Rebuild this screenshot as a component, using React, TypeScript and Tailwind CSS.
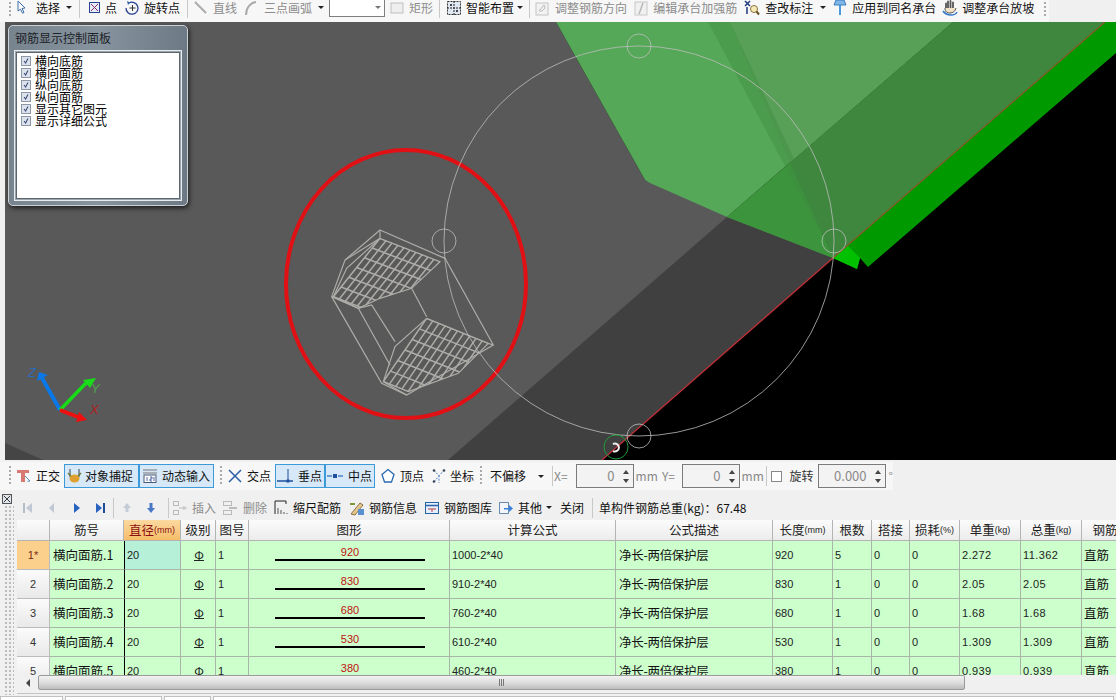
import React from "react";

const cjk = "font-['Noto_Sans_CJK_SC','Liberation_Sans',sans-serif]";
const digits = "font-['Liberation_Sans','Noto_Sans_CJK_SC',sans-serif]";

type IconProps = { children: React.ReactNode; className?: string };

const Ico: React.FC<IconProps> = ({ children, className = "" }) => (
  <svg viewBox="0 0 16 16" className={`w-4 h-4 shrink-0 ${className}`} fill="none">
    {children}
  </svg>
);

const Caret = ({ className = "" }: { className?: string }) => (
  <span className={`inline-block w-0 h-0 shrink-0 border-l-[3px] border-r-[3px] border-t-[3px] border-l-transparent border-r-transparent border-t-[#222] ${className}`} />
);

const Grip = ({ className = "" }: { className?: string }) => (
  <span className={`w-[2px] h-[20px] shrink-0 bg-[repeating-linear-gradient(180deg,#aaa_0_2px,transparent_2px_4px)] ${className}`} />
);

const Sep = ({ className = "" }: { className?: string }) => (
  <span className={`w-px h-[20px] shrink-0 bg-[#c8c8c8] ${className}`} />
);

type ToolProps = { icon?: React.ReactNode; label: string; off?: boolean; gap?: string; className?: string };

const Tool: React.FC<ToolProps> = ({ icon, label, off, gap = "gap-[4px]", className = "" }) => (
  <div className={`flex items-center shrink-0 whitespace-nowrap ${gap} ${off ? "text-[#8c8c8c]" : "text-[#111]"} ${className}`}>
    {icon}
    <span>{label}</span>
  </div>
);

const icons = {
  cursor: (
    <Ico>
      <path d="M5 1l7 7-3 .5 2 4-1.500.7-2-4L5 11z" fill="#fff" stroke="#3b6ea8" />
    </Ico>
  ),
  point: (
    <Ico>
      <rect x="2.500" y="2.500" width="10" height="10" stroke="#27408f" fill="#e9edf8" />
      <path d="M4 4l7 7M11 4l-7 7" stroke="#8a2a6a" />
    </Ico>
  ),
  rotate: (
    <Ico>
      <path d="M5 3a6 6 0 1 1-3 5" stroke="#27408f" strokeWidth="1.300" />
      <path d="M3 1l3 1.500-2 2.500z" fill="#2a62b0" />
      <path d="M8.500 5v6M5.500 8h6" stroke="#333" />
    </Ico>
  ),
  line: (
    <Ico>
      <path d="M2 2l11 11" stroke="#aaa" strokeWidth="2" />
    </Ico>
  ),
  arc: (
    <Ico>
      <path d="M3 15C3 8 7 3 13 2" stroke="#aaa" strokeWidth="2" />
    </Ico>
  ),
  rect: (
    <Ico>
      <rect x="2" y="3" width="12" height="10" fill="#eee" stroke="#c0c0c0" />
    </Ico>
  ),
  smart: (
    <Ico>
      <rect x="1.500" y="1.500" width="13" height="13" stroke="#333" fill="#dfe7f2" strokeDasharray="2 1" />
      <path d="M8 1v14M1 8h14" stroke="#222" strokeDasharray="2 1" />
      <circle cx="5" cy="5" r="1" fill="#111" />
      <circle cx="11" cy="11" r="1" fill="#111" />
    </Ico>
  ),
  adjust: (
    <Ico>
      <rect x="2" y="3" width="12" height="12" fill="#f2f2f2" stroke="#c4c4c4" />
      <path d="M5 11l5-6 1 3-3 3z" stroke="#bbb" />
    </Ico>
  ),
  edit: (
    <Ico>
      <rect x="2" y="2" width="12" height="13" fill="#f0f0f0" stroke="#c8c8c8" />
      <path d="M10 3L6 14" stroke="#b8b8b8" strokeWidth="1.500" />
    </Ico>
  ),
  search: (
    <Ico>
      <path d="M1 1l5 5M6 1L1 6M3 7v7" stroke="#203a80" strokeWidth="1.500" />
      <circle cx="10" cy="9" r="3.500" fill="#f6e9b8" stroke="#8a7440" />
      <path d="M12.500 11.500L15 14.500" stroke="#6a5020" strokeWidth="2" />
    </Ico>
  ),
  pin: (
    <Ico>
      <path d="M4 0h8l2 5H2z" fill="#7fb6e6" stroke="#3a7fc0" />
      <path d="M7 5h2v10H7z" fill="#4a98de" />
    </Ico>
  ),
  hand: (
    <Ico>
      <path d="M4 9V3.500M6 8V1.500M8.500 8V1M11 8V2.500" stroke="#555" strokeWidth="1.800" strokeLinecap="round" />
      <path d="M3 8c0 4 2 5 5 5s5-1.500 6-5" stroke="#555" fill="#f2e3c8" />
      <path d="M1 11c2 3 5 4 8 4s5-1 6-3" stroke="#2f78c8" strokeWidth="1.500" />
    </Ico>
  ),
  ortho: (
    <Ico>
      <path d="M1 2h12v3H9v9H5V5H1z" fill="#d97a72" />
      <path d="M9 8l5 5-2.500.3" stroke="#5a8db8" />
    </Ico>
  ),
  snap: (
    <Ico>
      <path d="M3 1v8M12 1v8" stroke="#5a6a7a" strokeWidth="1.300" />
      <ellipse cx="7.500" cy="10.500" rx="5" ry="4" fill="#e0a030" />
      <path d="M1 5l3 3M14 5l-3 3" stroke="#6a7a38" strokeWidth="1.500" />
    </Ico>
  ),
  dyn: (
    <Ico>
      <path d="M1 2h14M1 5h14" stroke="#777" />
      <rect x="2" y="7" width="12" height="7.500" fill="#fff" stroke="#4a5a78" />
      <path d="M5 9v4M8 9h2v2H8v2h2M12 9v4" stroke="#27408f" strokeWidth=".8" />
    </Ico>
  ),
  cross: (
    <Ico>
      <path d="M2 2l12 12M14 2L2 14" stroke="#2a5ea8" strokeWidth="1.500" />
    </Ico>
  ),
  perp: (
    <Ico>
      <path d="M0 13h16" stroke="#1f4f9f" strokeWidth="1.500" />
      <path d="M11 1v12" stroke="#1f4f9f" />
      <rect x="9.500" y="11.500" width="3" height="3" fill="#1f4f9f" />
    </Ico>
  ),
  mid: (
    <Ico>
      <path d="M0 8h5M11 8h5" stroke="#4a82c8" strokeWidth="1.500" />
      <rect x="6" y="6" width="4" height="4" fill="#1f4f9f" />
    </Ico>
  ),
  vertex: (
    <Ico>
      <path d="M8 1.500l6 5-2.500 7.500h-7L2 6.500z" stroke="#2a6ab0" fill="#fff" strokeWidth="1.300" />
    </Ico>
  ),
  coord: (
    <Ico>
      <path d="M3 14L8 8 13 2M3 2l5 6v7" stroke="#4a82c8" strokeDasharray="2 1.500" />
      <circle cx="3" cy="2.500" r="1.300" fill="#345" />
      <circle cx="13" cy="2.500" r="1.300" fill="#345" />
      <circle cx="3" cy="13.500" r="1.300" fill="#345" />
    </Ico>
  ),
  first: (
    <Ico>
      <path d="M4 3v10" stroke="#b4bcc8" strokeWidth="2" />
      <path d="M12 3v10L6 8z" fill="#c0c8d4" />
    </Ico>
  ),
  prev: (
    <Ico>
      <path d="M10 3v10L5 8z" fill="#c0c8d4" />
    </Ico>
  ),
  next: (
    <Ico>
      <path d="M6 3v10l6-5z" fill="#2a62c0" />
    </Ico>
  ),
  last: (
    <Ico>
      <path d="M4 3v10l6-5z" fill="#2a62c0" />
      <path d="M12 3v10" stroke="#1f4a98" strokeWidth="2" />
    </Ico>
  ),
  up: (
    <Ico>
      <path d="M8 3l4 5H9.500v4h-3V8H4z" fill="#c4ccd8" />
    </Ico>
  ),
  down: (
    <Ico>
      <path d="M6.500 3h3v5H12l-4 5-4-5h2.500z" fill="#4a78c8" />
    </Ico>
  ),
  insert: (
    <Ico>
      <rect x="1.500" y="1.500" width="5" height="4" stroke="#bbb" />
      <rect x="1.500" y="10.500" width="5" height="4" stroke="#bbb" />
      <path d="M7 8h8M12 6v4" stroke="#bbb" />
    </Ico>
  ),
  del: (
    <Ico>
      <rect x="1.500" y="1.500" width="8" height="4" stroke="#bbb" />
      <rect x="1.500" y="10.500" width="8" height="4" stroke="#bbb" />
      <path d="M7 8h8" stroke="#aaa" strokeWidth="1.500" />
    </Ico>
  ),
  scale: (
    <Ico>
      <path d="M2 1h11v3M2 1v13" stroke="#222" />
      <path d="M5 14V8M8 14v-4M11 14v-2M14 14v-1" stroke="#888" strokeWidth="1.500" />
    </Ico>
  ),
  info: (
    <Ico>
      <path d="M2 14L11 3l3 2-8 10z" fill="#e4c890" stroke="#8a7040" />
      <path d="M9 9h6v6H9z" fill="#5a90d0" />
      <path d="M1 4h5" stroke="#7a9a3a" strokeWidth="2" />
    </Ico>
  ),
  lib: (
    <Ico>
      <rect x="1.500" y="2.500" width="13" height="11" fill="#e4eefa" stroke="#2a62a8" />
      <path d="M2 5.500h12" stroke="#2a62a8" strokeWidth="1.500" />
      <path d="M4 9h8M8 9v3" stroke="#c04040" />
    </Ico>
  ),
  other: (
    <Ico>
      <rect x="1.500" y="2.500" width="9" height="11" fill="#f2f6fb" stroke="#6a8ab0" />
      <path d="M6 8h5V5l4 3.500-4 3.500V9.500H6z" fill="#3a82d8" />
    </Ico>
  ),
};

const Spin = ({ value, width }: { value: string; width: string }) => (
  <div className={`flex h-[24px] items-center justify-end border border-[#7b7b7b] bg-[#f3f3f3] shrink-0 ${width}`}>
    <span className={`text-[13px] text-[#8a8a8a] ${cjk}`}>{value}</span>
    <div className="ml-[6px] mr-[2px] flex w-[10px] flex-col items-center gap-[5px]">
      <span className="h-0 w-0 border-b-[4px] border-l-[3px] border-r-[3px] border-b-[#444] border-l-transparent border-r-transparent" />
      <span className="h-0 w-0 border-t-[4px] border-l-[3px] border-r-[3px] border-t-[#444] border-l-transparent border-r-transparent" />
    </div>
  </div>
);

const TopBar = () => (
  <div className={`flex h-[22px] shrink-0 bg-[#f0f0f0] overflow-hidden text-[12px] ${cjk}`}>
    <div className="flex h-[15px] w-[1049px] items-center bg-[#f7f7f7] pl-[9px] shadow-[0_7px_0_#f7f7f7]">
      <Grip />
      <Tool icon={icons.cursor} label="选择" gap="gap-[7px]" className="ml-[2px]" />
      <Caret className="ml-[6px]" />
      <Sep className="ml-[7px]" />
      <Tool icon={icons.point} label="点" gap="gap-[2px]" className="ml-[7px]" />
      <Tool icon={icons.rotate} label="旋转点" className="ml-[7px]" />
      <Sep className="ml-[7px]" />
      <Tool icon={icons.line} label="直线" off className="ml-[5px]" />
      <Tool icon={icons.arc} label="三点画弧" off gap="gap-[5px]" className="ml-[6px]" />
      <Caret className="ml-[6px]" />
      <div className="ml-[5px] flex h-[19px] w-[56px] shrink-0 items-center justify-end border border-t-0 border-[#7f7f7f] bg-white pr-[3px]">
        <Caret className="border-t-[#777]" />
      </div>
      <Tool icon={icons.rect} label="矩形" off gap="gap-[4px]" className="ml-[4px]" />
      <Sep className="ml-[6px]" />
      <Tool icon={icons.smart} label="智能布置" className="ml-[6px]" />
      <Caret className="ml-[3px]" />
      <Sep className="ml-[6px]" />
      <Tool icon={icons.adjust} label="调整钢筋方向" off gap="gap-[5px]" className="ml-[4px]" />
      <Tool icon={icons.edit} label="编辑承台加强筋" off gap="gap-[4px]" className="ml-[6px]" />
      <Tool icon={icons.search} label="查改标注" gap="gap-[5px]" className="ml-[7px]" />
      <Caret className="ml-[7px]" />
      <Tool icon={icons.pin} label="应用到同名承台" gap="gap-[4px]" className="ml-[6px]" />
      <Tool icon={icons.hand} label="调整承台放坡" gap="gap-[4px]" className="ml-[6px]" />
      <Grip className="ml-[10px]" />
    </div>
  </div>
);

const Check = () => (
  <span className="flex h-[10px] w-[10px] shrink-0 items-center justify-center border border-[#8d97a5] bg-[#dbe2ec]">
    <svg viewBox="0 0 10 10" className="h-[10px] w-[10px]" fill="none">
      <path d="M2.500 5l2 2.500L7.500 2" stroke="#38487a" strokeWidth="1.300" />
    </svg>
  </span>
);

const panelItems = ["横向底筋", "横向面筋", "纵向底筋", "纵向面筋", "显示其它图元", "显示详细公式"];

const RebarPanel = () => (
  <div className={`absolute left-[3px] top-[3px] flex h-[181px] w-[180px] flex-col rounded-[5px] border border-[#c9d0d6] bg-gradient-to-r from-[#77838d] via-[#87949f] to-[#6d7a85] px-[5px] shadow-[1px_2px_5px_rgba(0,0,0,.7)] ${cjk}`}>
    <div className="flex h-[24px] shrink-0 items-center pl-[1px] text-[12px] text-[#1c2228]">钢筋显示控制面板</div>
    <div className="border border-[#e8ecef] p-[1px]">
      <div className="flex h-[147px] flex-col border border-[#5c666e] bg-white pl-[4px] pt-[2px] outline outline-1 outline-[#9aa4ad]">
        {panelItems.map((t) => (
          <div key={t} className="flex h-[12px] items-center gap-[4px] whitespace-nowrap text-[12px] leading-[12px] text-black">
            <Check />
            <span>{t}</span>
          </div>
        ))}
      </div>
    </div>
  </div>
);

// wire mesh lines, in a 3x working space so they are easier to read off
const family = (ox: number, oy: number, ux: number, uy: number, vx: number, vy: number, n: number) =>
  Array.from({ length: n + 1 }, (_, i) => {
    const t = i / n;
    const x = ox + ux * t;
    const y = oy + uy * t;
    return <line key={i} x1={x} y1={y} x2={x + vx} y2={y + vy} />;
  });

const Rebars = () => (
  <g transform="translate(280 210) scale(.3333)" fill="none" stroke="#aeada9">
    <defs>
      <clipPath id="meshA">
        <polygon points="300,85 480,155 395,235 300,265 235,295 160,260 200,175" />
      </clipPath>
      <clipPath id="meshB">
        <polygon points="440,325 625,400 535,490 385,545 310,515 345,410" />
      </clipPath>
    </defs>
    <g strokeWidth="3.600">
      <path d="M300 60L495 145L640 405L380 555L305 520L155 260L195 150Z" />
      <path d="M195 150L300 85M300 60L300 85M155 260L235 295L275 285L345 395M235 295L330 465M395 235L440 320M380 555L310 515" />
      <path d="M160 260L235 295L300 265L395 235L480 155L300 85L200 175Z" />
      <path d="M440 325L625 400L640 405M625 400L535 490L385 545L310 515L345 410L440 325" />
    </g>
    <g clipPath="url(#meshA)" strokeWidth="4.500">
      {family(300, 85, 180, 70, -140, 175, 10)}
      {family(300, 85, -140, 175, 260, 100, 6)}
    </g>
    <g clipPath="url(#meshB)" strokeWidth="4.500">
      {family(440, 325, 185, 75, -130, 190, 10)}
      {family(440, 325, -130, 190, 260, 105, 6)}
    </g>
  </g>
);

const Scene = () => (
  <svg viewBox="5 22 1111 438" className="absolute inset-0 h-[438px] w-[1111px]">
    <rect x="5" y="22" width="1111" height="438" fill="#000" />
    <polygon points="5,22 556,22 645,180 833,258 602,460 5,460" fill="#595959" />
    <polygon points="5,443 43,460 5,460" fill="#454545" />
    <polygon points="727,217 833,258 602,460 448,460" fill="#404040" />
    <polygon points="556,22 953,22 727,217 650,183 645,180" fill="#55a857" />
    <polygon points="730,22 953,22 790,163" fill="#58a058" />
    <polygon points="953,22 1105,22 833,258 727,217" fill="#3f863f" />
    <polygon points="727,217 790,163 833,258" fill="#3c953c" />
    <polygon points="708,22 730,22 836,248 830,250" fill="#3f8a3f" opacity=".4" />
    <polygon points="833,258 1105,22 1116,22 1116,53 868,267 860,258 857,269" fill="#009a00" />
    <polygon points="833,258 848,246 860,258 857,269" fill="#00c000" />
    <line x1="1105" y1="22" x2="833" y2="258" stroke="#8a5a2a" strokeWidth="1.200" />
    <line x1="833" y1="258" x2="602" y2="460" stroke="#c03038" strokeWidth="1.200" />
    <ellipse cx="406" cy="284" rx="120" ry="134" fill="none" stroke="#e01014" strokeWidth="4" />
    <Rebars />
    <g fill="none" stroke="#bdbdbd" strokeWidth=".8">
      <circle cx="639" cy="241" r="195" />
      <circle cx="639" cy="46" r="12" />
      <circle cx="444" cy="241" r="12" />
      <circle cx="834" cy="241" r="12" />
      <circle cx="639" cy="436" r="12" />
    </g>
    <circle cx="616" cy="447" r="12" fill="none" stroke="#1f9a3a" />
    <path d="M613 444a4 4 0 1 1 0 7" fill="none" stroke="#eee" strokeWidth="2" />
    <path d="M60 410L42 378" stroke="#0a78e8" strokeWidth="4" />
    <path d="M39 372L48 375L37 381Z" fill="#0a78e8" />
    <path d="M60 410L88 381" stroke="#18dc18" strokeWidth="3.500" />
    <path d="M96 378L90 388L83 380Z" fill="#18dc18" />
    <path d="M60 410L78 417" stroke="#ee1010" strokeWidth="4" />
    <path d="M87 420L76 422L79 412Z" fill="#ee1010" />
    <g fontSize="13" fontStyle="italic" fontFamily="'Liberation Sans',sans-serif">
      <text x="28" y="377" fill="#2c6ab8">Z</text>
      <text x="91" y="393" fill="#4ea24e">Y</text>
      <text x="90" y="414" fill="#b02020">X</text>
    </g>
  </svg>
);

const Viewport = () => (
  <div className="flex h-[438px] shrink-0">
    <div className="w-[5px] shrink-0 bg-[#f0f0f0]" />
    <div className="relative w-[1111px] overflow-hidden">
      <Scene />
      <RebarPanel />
    </div>
  </div>
);

const Active: React.FC<{ icon: React.ReactNode; label: string; className?: string }> = ({ icon, label, className = "" }) => (
  <div className={`flex h-[24px] shrink-0 items-center whitespace-nowrap border border-[#3d9ad8] bg-[#d7e9f8] ${className}`}>
    {icon}
    <span>{label}</span>
  </div>
);

const SnapBar = () => (
  <div className={`flex h-[30px] shrink-0 items-center bg-[#f0f0f0] pt-[2px] text-[12px] text-[#111] ${cjk}`}>
    <div className="flex h-[28px] w-[893px] items-center bg-[#f7f7f7] pl-[9px]">
      <Grip />
      <Tool icon={icons.ortho} label="正交" gap="gap-[4px]" className="ml-[5px]" />
      <Active icon={icons.snap} label="对象捕捉" className="ml-[4px] w-[75px] gap-[2px] pl-[2px]" />
      <Active icon={icons.dyn} label="动态输入" className="w-[75px] gap-[4px] pl-[2px]" />
      <Grip className="ml-[6px]" />
      <Tool icon={icons.cross} label="交点" gap="gap-[4px]" className="ml-[5px]" />
      <Active icon={icons.perp} label="垂点" className="ml-[4px] w-[50px] gap-[5px] pl-[1px]" />
      <Active icon={icons.mid} label="中点" className="w-[50px] gap-[5px] pl-[1px]" />
      <Tool icon={icons.vertex} label="顶点" gap="gap-[4px]" className="ml-[5px]" />
      <Tool icon={icons.coord} label="坐标" gap="gap-[3px]" className="ml-[7px]" />
      <Grip className="ml-[6px]" />
      <span className="ml-[8px] w-[40px] shrink-0">不偏移</span>
      <Caret className="ml-[8px]" />
      <Sep className="ml-[8px]" />
      <span className="ml-[1px] text-[#888] w-[22px]">X=</span>
      <Spin value="0" width="w-[58px]" />
      <span className="ml-[2px] w-[25px] text-[#888]">mm</span>
      <span className="ml-[2px] w-[20px] text-[#888]">Y=</span>
      <Spin value="0" width="w-[58px]" />
      <span className="ml-[2px] w-[22px] text-[#888]">mm</span>
      <Sep className="ml-[2px]" />
      <span className="ml-[4px] h-[11px] w-[11px] shrink-0 border border-[#888] bg-white" />
      <span className="ml-[8px] w-[25px] shrink-0 text-[#333]">旋转</span>
      <Spin value="0.000" width="ml-[3px] w-[68px]" />
      <span className="ml-[3px] text-[#888]">°</span>
    </div>
  </div>
);

const EditBar = () => (
  <div className={`flex h-[25px] shrink-0 items-center pl-[3px] text-[12px] text-[#111] ${cjk}`}>
    <span className="flex w-[24px] shrink-0">{icons.first}</span>
    <span className="flex w-[24px] shrink-0">{icons.prev}</span>
    <span className="flex w-[24px] shrink-0">{icons.next}</span>
    <span className="flex w-[21px] shrink-0">{icons.last}</span>
    <Sep />
    <span className="ml-[5px] flex w-[24px] shrink-0">{icons.up}</span>
    <span className="flex w-[18px] shrink-0">{icons.down}</span>
    <Sep className="ml-[7px]" />
    <Tool icon={icons.insert} label="插入" off className="ml-[3px]" />
    <Tool icon={icons.del} label="删除" off gap="gap-[5px]" className="ml-[6px]" />
    <Tool icon={icons.scale} label="缩尺配筋" className="ml-[6px]" />
    <Tool icon={icons.info} label="钢筋信息" gap="gap-[4px]" className="ml-[8px]" />
    <Tool icon={icons.lib} label="钢筋图库" gap="gap-[4px]" className="ml-[7px]" />
    <Tool icon={icons.other} label="其他" gap="gap-[4px]" className="ml-[6px]" />
    <Caret className="ml-[4px]" />
    <span className="ml-[8px]">关闭</span>
    <Sep className="ml-[8px]" />
    <span className="ml-[6px] whitespace-nowrap">单构件钢筋总重(kg)：67.48</span>
  </div>
);

const gridCols =
  "grid w-[1137px] grid-cols-[33px_74px_57px_35px_33px_201px_166px_157px_60px_39px_38px_50px_61px_61px_72px]";

const unit = (s: string) => <span className={`mt-[2px] text-[9px] ${digits}`}>{s}</span>;

const headers: { label: string; u?: string }[] = [
  { label: "" },
  { label: "筋号" },
  { label: "直径", u: "(mm)" },
  { label: "级别" },
  { label: "图号" },
  { label: "图形" },
  { label: "计算公式" },
  { label: "公式描述" },
  { label: "长度", u: "(mm)" },
  { label: "根数" },
  { label: "搭接" },
  { label: "损耗", u: "(%)" },
  { label: "单重", u: "(kg)" },
  { label: "总重", u: "(kg)" },
  { label: "钢筋归类" },
];

const rows = [
  { no: "1*", name: "横向面筋.1", len: "920", formula: "1000-2*40", count: "5", unitW: "2.272", total: "11.362" },
  { no: "2", name: "横向面筋.2", len: "830", formula: "910-2*40", count: "1", unitW: "2.05", total: "2.05" },
  { no: "3", name: "横向面筋.3", len: "680", formula: "760-2*40", count: "1", unitW: "1.68", total: "1.68" },
  { no: "4", name: "横向面筋.4", len: "530", formula: "610-2*40", count: "1", unitW: "1.309", total: "1.309" },
  { no: "5", name: "横向面筋.5", len: "380", formula: "460-2*40", count: "1", unitW: "0.939", total: "0.939" },
];

const cell = "flex items-center overflow-hidden whitespace-nowrap border-r border-b border-[#a9b5a9] pl-[2px]";
const num = `text-[11px] text-[#222] ${digits}`;
const txt = `text-[12.500px] text-[#111] ${cjk}`;

const RebarTable = () => (
  <div className="relative h-[155px] shrink-0 overflow-hidden bg-[#ccffcc]">
    <div className={gridCols}>
      {headers.map((h, i) => (
        <div
          key={i}
          className={`flex h-[21px] items-center justify-center whitespace-nowrap border-r border-b border-[#b4b4b4] text-[12.500px] ${cjk} ${
            i === 2
              ? "bg-gradient-to-b from-[#fbd9a0] to-[#f6bd68] text-[#8a1010]"
              : "bg-gradient-to-b from-[#fbfbfb] to-[#ececec] text-[#222]"
          }`}
        >
          {h.label}
          {h.u && unit(h.u)}
        </div>
      ))}
      {rows.map((r, i) => (
        <React.Fragment key={r.no}>
          <div
            className={`flex h-[29px] items-center justify-center border-r border-b border-[#bbb] text-[11px] ${digits} ${
              i === 0 ? "bg-[#fbd08c] text-[#7a2a10]" : "bg-gradient-to-b from-[#fbfbfb] to-[#e9e9e9] text-[#333]"
            }`}
          >
            {r.no}
          </div>
          <div className={`${cell} ${txt} border-r-0 pl-[3px]`}>{r.name}</div>
          <div className={`${cell} ${num} border-l border-l-black ${i === 0 ? "bg-[#b6f0d9]" : ""}`}>20</div>
          <div className={`${cell} justify-center pl-0 text-[12px] text-[#222] ${cjk}`}>
            <span className="border-b border-[#222] leading-[10px]">Φ</span>
          </div>
          <div className={`${cell} ${num}`}>1</div>
          <div className={`${cell} relative justify-center pl-0`}>
            <span className={`absolute top-[5px] text-[11px] leading-[12px] text-[#c01010] ${digits}`}>{r.len}</span>
            <span className="absolute top-[18px] h-[2px] w-[150px] bg-black" />
          </div>
          <div className={`${cell} ${num}`}>{r.formula}</div>
          <div className={`${cell} ${txt} pl-[3px] tracking-[-0.3px]`}>净长-两倍保护层</div>
          <div className={`${cell} ${num}`}>{r.len}</div>
          <div className={`${cell} ${num}`}>{r.count}</div>
          <div className={`${cell} ${num}`}>0</div>
          <div className={`${cell} ${num}`}>0</div>
          <div className={`${cell} ${num} tracking-[0.4px]`}>{r.unitW}</div>
          <div className={`${cell} ${num} tracking-[0.4px]`}>{r.total}</div>
          <div className={`${cell} ${txt}`}>直筋</div>
        </React.Fragment>
      ))}
    </div>
  </div>
);

const HScroll = () => (
  <div className="flex h-[15px] shrink-0 bg-[#f0f0f0]">
    <div className="flex w-[21px] shrink-0 items-center justify-center">
      <span className="h-0 w-0 border-y-[4px] border-r-[4px] border-y-transparent border-r-[#444]" />
    </div>
    <div className="flex w-[927px] shrink-0 items-center justify-center gap-[1px] rounded-[2px] border border-[#9a9a9a] bg-gradient-to-b from-[#f2f2f2] via-[#dedede] to-[#bdbdbd]">
      <span className="h-[7px] w-px bg-[#777]" />
      <span className="h-[7px] w-px bg-[#777]" />
      <span className="h-[7px] w-px bg-[#777]" />
    </div>
  </div>
);

const tabWidths = ["w-[63px]", "w-[97px]", "w-[47px]", "w-[901px]"];

export default function App() {
  return (
    <div className="flex h-[700px] w-[1116px] flex-col overflow-hidden bg-[#f0f0f0]">
      <TopBar />
      <Viewport />
      <SnapBar />
      <div className="h-[5px] shrink-0" />
      <div className="flex h-[201px] shrink-0">
        <div className="flex w-[17px] shrink-0 flex-col items-center">
          <span className="mr-[4px] mt-[-1px] flex h-[10px] w-[10px] items-center justify-center border border-[#555] bg-[#dfe6ee]">
            <svg viewBox="0 0 10 10" className="h-[8px] w-[8px]" fill="none">
              <path d="M1 1l8 8M9 1L1 9" stroke="#333" strokeWidth="1.200" />
            </svg>
          </span>
          <span className="mt-[1px] h-[190px] w-[10px] bg-[radial-gradient(#bdbdbd_0.8px,transparent_1px)] bg-[length:4px_4px]" />
        </div>
        <div className="flex w-[1099px] flex-col">
          <EditBar />
          <RebarTable />
          <HScroll />
          <div className="mt-[3px] h-px bg-[#c4c4c4]" />
        </div>
      </div>
      <div className="flex h-[4px] shrink-0 gap-[2px]">
        {tabWidths.map((w) => (
          <span key={w} className={`${w} shrink-0 border-x border-t border-[#c0c0c0] bg-white`} />
        ))}
      </div>
    </div>
  );
}
